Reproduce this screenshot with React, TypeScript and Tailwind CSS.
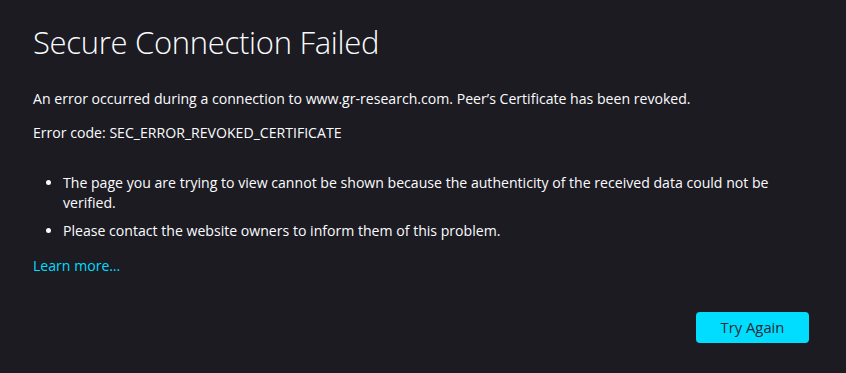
export default function App() {
  return (
    <div
      className="min-h-[373px] w-full bg-[#1c1b22] text-[#fbfbfe]"
      style={{ fontFamily: '"Open Sans", "Noto Sans", sans-serif' }}
    >
      <div className="w-[809px] pl-[33px] pt-[22px]">
        <h1 className="text-[31px] font-light leading-[40px] tracking-[-0.3px]">
          Secure Connection Failed
        </h1>
        <p className="mt-[27px] text-[14.1px] leading-[20px]">
          An error occurred during a connection to www.gr-research.com. Peer’s Certificate has been revoked.
        </p>
        <p className="mt-[14px] text-[14.1px] leading-[20px]">
          Error code: SEC_ERROR_REVOKED_CERTIFICATE
        </p>
        <ul className="mt-[30px] list-disc pl-[30px] text-[14.1px] leading-[20px]">
          <li>
            The page you are trying to view cannot be shown because the authenticity of the received data could not be verified.
          </li>
          <li className="mt-[8px]">
            Please contact the website owners to inform them of this problem.
          </li>
        </ul>
        <a href="#" className="mt-[15px] block text-[14.1px] leading-[20px] text-[#00ddff]">
          Learn more…
        </a>
        <div className="mt-[36px] flex justify-end">
          <button className="h-[31px] w-[113px] rounded-[4px] bg-[#00ddff] text-[14.8px] font-medium text-[#2b2a33]">
            Try Again
          </button>
        </div>
      </div>
    </div>
  );
}
